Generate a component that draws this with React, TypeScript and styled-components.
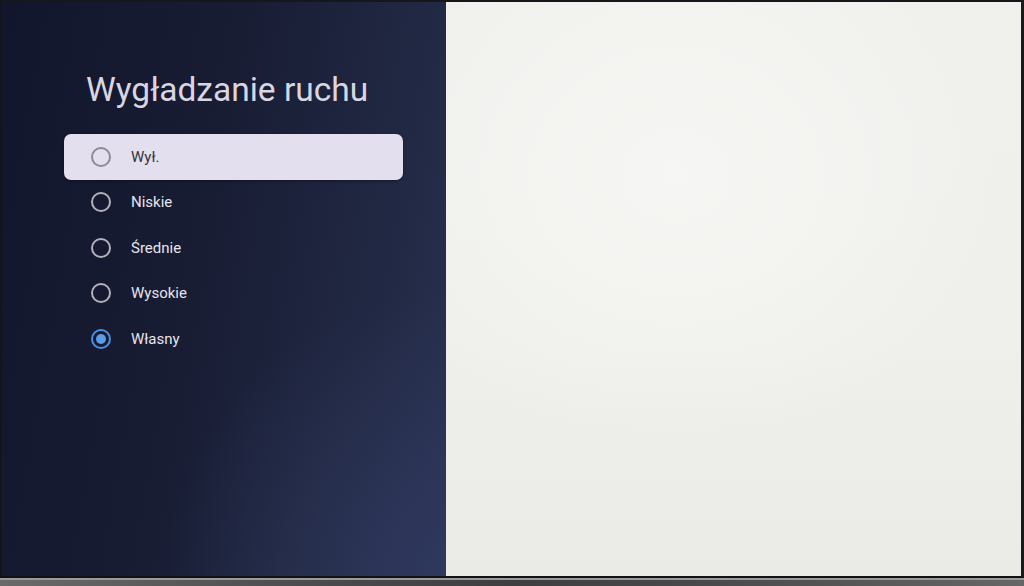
import React, { FunctionComponent } from "react";
import styled, { createGlobalStyle } from "styled-components";

const GlobalStyle = createGlobalStyle`
  html, body {
    margin: 0;
    padding: 0;
    background: #111;
  }
  body {
    font-family: Roboto, "Noto Sans", "Liberation Sans", sans-serif;
  }
`;

const Frame = styled.div`
  width: 1024px;
  height: 586px;
  display: flex;
  flex-direction: column;
  overflow: hidden;
  background: #0c0c0e;
`;

const Screen = styled.div`
  flex: 1;
  display: flex;
  border-top: 2px solid #16171b;
  border-left: 2px solid #14151a;
  border-right: 3px solid #1a1a1c;
  border-bottom: 2px solid #111214;
`;

const Bezel = styled.div`
  height: 8px;
  background: linear-gradient(
    to right,
    #6a6a6a 0%,
    #4c4c4e 30%,
    #3e3e40 50%,
    #4a4a4c 70%,
    #666 100%
  );
  box-shadow: inset 0 2px 0 #9a9a9a;
`;

const SidePanel = styled.div`
  width: 444px;
  display: flex;
  flex-direction: column;
  padding: 64px 0 0 62px;
  box-sizing: border-box;
  background:
    radial-gradient(ellipse 90% 70% at 100% 100%, rgba(48, 58, 96, 0.8), rgba(48, 58, 96, 0) 70%),
    linear-gradient(100deg, #12162c 0%, #181d34 45%, #222944 80%, #2a3253 100%);
`;

const Preview = styled.div`
  flex: 1;
  background:
    radial-gradient(ellipse 70% 60% at 40% 30%, #f6f6f4, rgba(246, 246, 244, 0) 80%),
    linear-gradient(180deg, #f0f0ed 0%, #efefeb 60%, #eaeae6 100%);
`;

const Title = styled.h1`
  margin: 0 0 20px 22px;
  font-size: 33.5px;
  line-height: 48px;
  font-weight: 400;
  color: #d9d6e2;
`;

const OptionList = styled.div`
  display: flex;
  flex-direction: column;
  width: 339px;
`;

const OptionRow = styled.div<{ $focused?: boolean }>`
  display: flex;
  align-items: center;
  height: 45.5px;
  padding-left: 27px;
  border-radius: 7px;
  background: ${(p) => (p.$focused ? "#e3dfee" : "transparent")};
  box-shadow: ${(p) => (p.$focused ? "0 1px 3px rgba(0,0,0,0.4)" : "none")};
`;

const Radio = styled.span<{ $checked?: boolean; $focused?: boolean }>`
  width: 20px;
  height: 20px;
  box-sizing: border-box;
  border-radius: 50%;
  border: 2px solid
    ${(p) => (p.$checked ? "#4d8fe2" : p.$focused ? "#8d8a94" : "#b3b1ba")};
  display: flex;
  align-items: center;
  justify-content: center;
  flex-shrink: 0;

  &::after {
    content: "";
    display: ${(p) => (p.$checked ? "block" : "none")};
    width: 10px;
    height: 10px;
    border-radius: 50%;
    background: #5b9be9;
  }
`;

const OptionLabel = styled.span<{ $focused?: boolean }>`
  margin-left: 20px;
  font-size: 15px;
  color: ${(p) => (p.$focused ? "#34323a" : "#e6e4ee")};
`;

interface Option {
  label: string;
  checked?: boolean;
}

const options: Option[] = [
  { label: "Wył." },
  { label: "Niskie" },
  { label: "Średnie" },
  { label: "Wysokie" },
  { label: "Własny", checked: true },
];

const OptionItem: FunctionComponent<{ option: Option; focused: boolean }> = ({
  option,
  focused,
}) => (
  <OptionRow $focused={focused}>
    <Radio $checked={option.checked} $focused={focused} />
    <OptionLabel $focused={focused}>{option.label}</OptionLabel>
  </OptionRow>
);

const App: FunctionComponent = () => {
  return (
    <>
      <GlobalStyle />
      <Frame>
        <Screen>
          <SidePanel>
            <Title>Wygładzanie ruchu</Title>
            <OptionList>
              {options.map((option, i) => (
                <OptionItem key={option.label} option={option} focused={i === 0} />
              ))}
            </OptionList>
          </SidePanel>
          <Preview />
        </Screen>
        <Bezel />
      </Frame>
    </>
  );
};

export default App;
